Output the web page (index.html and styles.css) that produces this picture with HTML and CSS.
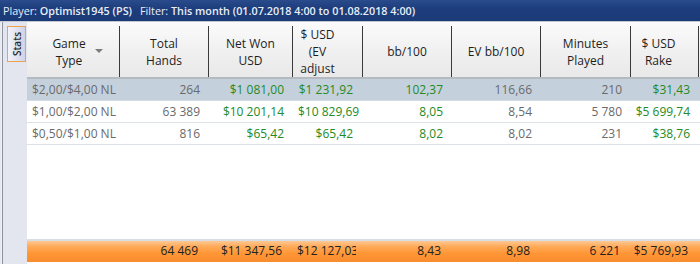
FILE: index.html
```html
<!DOCTYPE html>
<html>
<head>
<meta charset="utf-8">
<link rel="stylesheet" href="styles.css">
</head>
<body>
<div class="titlebar"><span>Player: </span><b>Optimist1945 (PS)</b><span class="gap">Filter: </span><b>This month (01.07.2018 4:00 to 01.08.2018 4:00)</b></div>
<div class="main">
  <div class="sidebar">
    <div class="tab"><span>Stats</span></div>
  </div>
  <div class="grid">
    <div class="thead">
      <div class="th first"><span class="lbl">Game<br>Type</span><span class="arrow"></span></div>
      <div class="th"><span class="lbl">Total<br>Hands</span></div>
      <div class="th"><span class="lbl">Net Won<br>USD</span></div>
      <div class="th narrow"><span class="lbl">$ USD<br>(EV<br>adjust</span></div>
      <div class="th"><span class="lbl">bb/100</span></div>
      <div class="th"><span class="lbl">EV bb/100</span></div>
      <div class="th"><span class="lbl">Minutes<br>Played</span></div>
      <div class="th last"><span class="lbl">$ USD<br>Rake</span></div>
    </div>
    <div class="row sel">
      <div class="td name">$2,00/$4,00 NL Holdem</div>
      <div class="td">264</div>
      <div class="td g">$1&nbsp;081,00</div>
      <div class="td g ev">$1&nbsp;231,92</div>
      <div class="td g">102,37</div>
      <div class="td">116,66</div>
      <div class="td">210</div>
      <div class="td g">$31,43</div>
    </div>
    <div class="row">
      <div class="td name">$1,00/$2,00 NL Holdem</div>
      <div class="td">63&nbsp;389</div>
      <div class="td g">$10&nbsp;201,14</div>
      <div class="td g ev">$10&nbsp;829,69</div>
      <div class="td g">8,05</div>
      <div class="td">8,54</div>
      <div class="td">5&nbsp;780</div>
      <div class="td g">$5&nbsp;699,74</div>
    </div>
    <div class="row">
      <div class="td name">$0,50/$1,00 NL Holdem</div>
      <div class="td">816</div>
      <div class="td g">$65,42</div>
      <div class="td g ev">$65,42</div>
      <div class="td g">8,02</div>
      <div class="td">8,02</div>
      <div class="td">231</div>
      <div class="td g">$38,76</div>
    </div>
    <div class="empty"></div>
    <div class="tfoot">
      <div class="tf"></div>
      <div class="tf">64&nbsp;469</div>
      <div class="tf">$11&nbsp;347,56</div>
      <div class="tf ev">$12&nbsp;127,03</div>
      <div class="tf">8,43</div>
      <div class="tf">8,98</div>
      <div class="tf">6&nbsp;221</div>
      <div class="tf">$5&nbsp;769,93</div>
    </div>
  </div>
</div>
</body>
</html>
```
FILE: styles.css
```css
* { box-sizing: border-box; }
html, body {
  margin: 0;
  padding: 0;
  width: 700px;
  height: 264px;
  overflow: hidden;
  background: #e6e9ef;
  font-family: "Open Sans", "Noto Sans", sans-serif;
}
.titlebar {
  height: 21px;
  background: linear-gradient(#2a4c8c, #1d3d7c 40%, #1a3a78);
  color: #e8eef8;
  font-size: 10.8px;
  line-height: 21px;
  padding-left: 3px;
  white-space: nowrap;
}
.titlebar b { font-weight: 600; }
.titlebar .gap { margin-left: 8px; }
.main {
  display: flex;
  height: 243px;
  border-top: 1px solid #c4c8d0;
}
.sidebar {
  width: 26px;
  flex: none;
  background: #e3e6ee;
  padding: 4px 0 0 4px;
  border-left: 1px solid #eef0f5;
  margin-left: 1px;
  box-shadow: inset 1px 0 0 #8d929b;
}
.tab {
  width: 19px;
  height: 36px;
  margin-left: 1px;
  border: 1px solid #f0a24a;
  background: linear-gradient(90deg, #f2f3fa, #cfd3e6);
  display: flex;
  align-items: center;
  justify-content: center;
}
.tab span {
  writing-mode: vertical-rl;
  transform: rotate(180deg);
  font-size: 10px;
  font-weight: 600;
  color: #2a2a2a;
  line-height: 1;
}
.grid {
  flex: 1;
  display: flex;
  flex-direction: column;
  background: #fff;
  min-width: 0;
}
.thead, .row, .tfoot {
  display: grid;
  grid-template-columns: 93px 89px 84px 70px 89px 89px 90px 68px;
}
.thead {
  height: 57px;
  background: linear-gradient(#fbfbfb, #efefef 60%, #e9e9e9);
  border-bottom: 2px solid #b5b9c0;
}
.th {
  margin: 4px 0 6px;
  border-right: 1px solid #3a3a3a;
  display: flex;
  align-items: center;
  justify-content: center;
  text-align: center;
  font-size: 12px;
  line-height: 17px;
  color: #1e1e1e;
  overflow: visible;
}
.th.first { justify-content: flex-start; padding-left: 22px; }
.th.first .lbl { width: 40px; }
.th.narrow { padding-right: 20px; }
.th.last { padding-right: 12px; }
.arrow {
  margin-left: 6px;
  margin-top: -1px;
  width: 0; height: 0;
  border-left: 4px solid transparent;
  border-right: 4px solid transparent;
  border-top: 4px solid #7c7c7c;
}
.row {
  height: 22px;
  border-bottom: 1px solid #dde1e8;
  font-size: 12px;
  color: #6a6a6a;
}
.row.sel { background: #c5d0dd; border-bottom-color: #d6dce4; }
.td {
  text-align: right;
  padding-right: 9px;
  line-height: 21px;
  white-space: nowrap;
  overflow: hidden;
}
.td.name { text-align: left; padding-left: 5px; padding-right: 0; margin-right: 4px; }
.td.ev { padding-left: 5px; padding-right: 10px; }
.td.g { color: #248a24; }
.empty { flex: 1; }
.tfoot {
  height: 23px;
  border-top: 2px solid #d9dde4;
  background: linear-gradient(#ffc894 0%, #ffa956 28%, #ff9636 60%, #f98c2c 100%);
  font-size: 12px;
  color: #222;
  margin-bottom: 2px;
}
.tf {
  text-align: right;
  padding-right: 9px;
  margin-right: 2px;
  line-height: 20px;
  white-space: nowrap;
  overflow: hidden;
}
.tf.ev { padding-left: 4px; padding-right: 0; margin-right: 7px; }
```
